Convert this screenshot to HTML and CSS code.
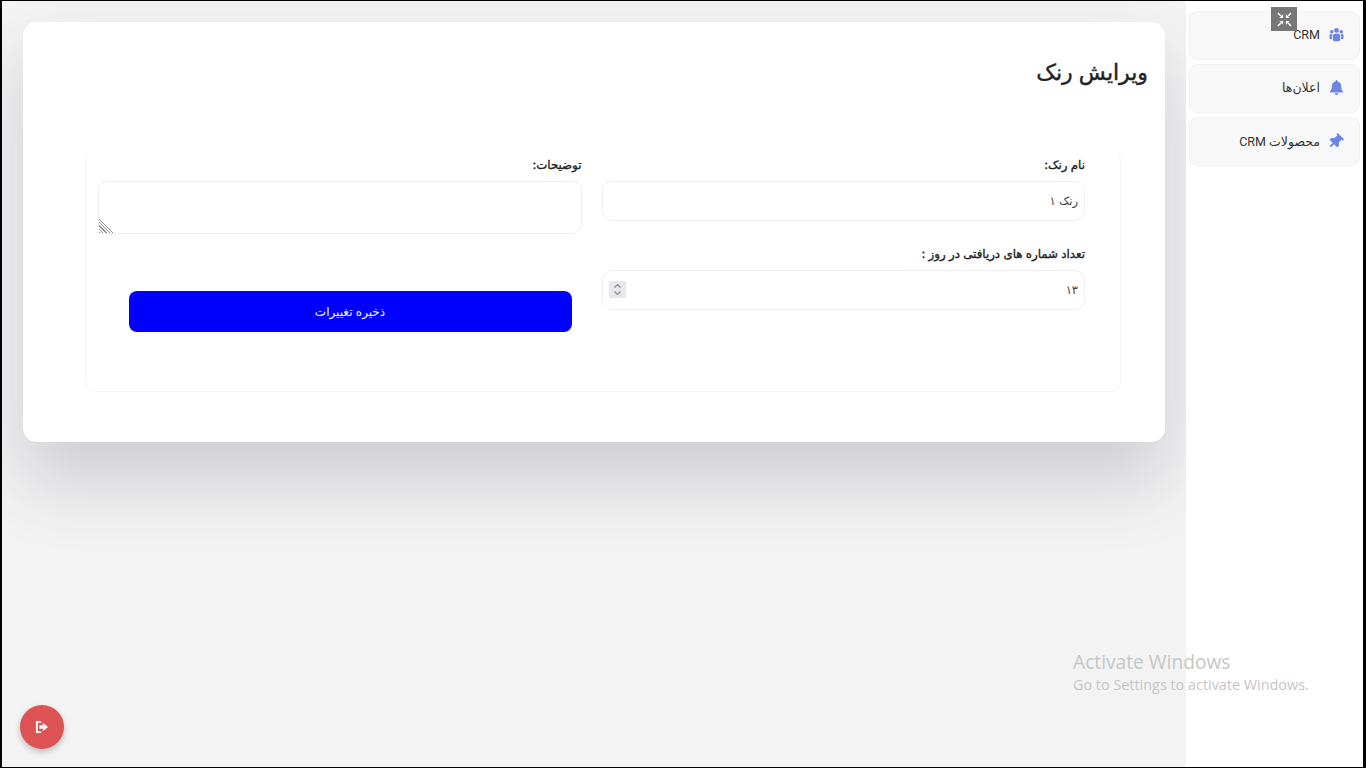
FILE: index.html
```html
<!DOCTYPE html>
<html lang="fa" dir="rtl">
<head>
<meta charset="utf-8">
<title>ویرایش رنک</title>
<link rel="stylesheet" href="styles.css">
</head>
<body>
<div class="frame">
  <aside class="sidebar">
    <a class="nav-item"><svg class="nav-icon" viewBox="0 0 16 16"><circle cx="8" cy="3.6" r="2.6"/><circle cx="2.9" cy="5" r="1.9"/><circle cx="13.1" cy="5" r="1.9"/><path d="M6.4 7.2h3.2c1.3 0 2.3 1 2.3 2.3v4.2c0 .9-.7 1.6-1.6 1.6H5.700c-.9 0-1.600-.7-1.600-1.600V9.500c0-1.300 1-2.300 2.300-2.300zM1.900 7.400h1.700c-.3.600-.5 1.300-.5 2.100v3.600H1.800c-.8 0-1.300-.6-1.300-1.300V8.900c0-.8.600-1.500 1.400-1.500zM12.400 7.400h1.700c.8 0 1.400.7 1.400 1.500v2.900c0 .7-.5 1.300-1.300 1.300h-1.300V9.500c0-.8-.2-1.500-.5-2.100z"/></svg><span>CRM</span></a>
    <a class="nav-item"><svg class="nav-icon" viewBox="0 0 448 512"><path d="M224 0c-18 0-32 14-32 32v19C119 66 64 131 64 208v29c0 47-17 92-48 127l-7 8c-8 9-10 23-5 34s16 18 28 18h384c12 0 23-7 28-18s3-25-5-34l-7-8c-31-35-48-80-48-127v-29c0-77-55-142-128-157V32c0-18-14-32-32-32zm45 493c12-12 19-28 19-45H160c0 17 7 33 19 45s28 19 45 19 33-7 45-19z"/></svg><span>اعلان‌ها</span></a>
    <a class="nav-item"><svg class="nav-icon pin" viewBox="-128 -64 640 640"><g transform="rotate(45 192 256)"><path d="M32 32C32 14 46 0 64 0h256c18 0 32 14 32 32s-14 32-32 32h-29l11 148c37 20 66 54 79 96l1 3c3 10 1 20-5 29s-15 13-25 13H32c-10 0-20-5-26-13s-7-19-4-29l1-3c13-42 42-76 79-96L93 64H64C46 64 32 50 32 32zm128 320h64v128c0 18-14 32-32 32s-32-14-32-32V352z"/></g></svg><span>محصولات CRM</span></a>
  </aside>
  <main class="content">
    <section class="card">
      <h1 class="title">ویرایش رنک</h1>
      <form class="panel">
        <div class="col">
          <label class="field">
            <span class="label">نام رنک:</span>
            <input class="control" type="text" value="رنک ۱">
          </label>
          <label class="field">
            <span class="label">تعداد شماره های دریافتی در روز :</span>
            <span class="number-wrap">
              <input class="control" type="text" value="۱۳">
              <svg class="spinner" viewBox="0 0 17 17"><rect width="17" height="17" fill="#e9e9ed"/><path d="M5.500 6.500 8.500 3.500 11.500 6.500M5.500 10.500 8.500 13.500 11.500 10.500" fill="none" stroke="#8a8a8e" stroke-width="1.2"/></svg>
            </span>
          </label>
        </div>
        <div class="col">
          <label class="field">
            <span class="label">توضیحات:</span>
            <textarea class="control area"></textarea>
          </label>
          <button class="save" type="button">ذخیره تغییرات</button>
        </div>
      </form>
    </section>
    <button class="exit" type="button"><svg viewBox="0 0 16 14" width="14" height="12"><path d="M7 1H2v12h5" fill="none" stroke="#fff" stroke-width="2.2"/><path d="M5 5h4V2l6 5-6 5V9H5z" fill="#fff"/></svg></button>
  </main>
  <button class="fs" type="button"><svg viewBox="0 0 16 16" width="15" height="15"><path d="M6.500 6.500H2.500L6.500 2.500zM9.500 6.500h4l-4-4zM6.500 9.500H2.500l4 4zM9.500 9.500h4l-4 4z" fill="#fff"/><path d="M1 1l3.200 3.200M15 1l-3.200 3.200M1 15l3.200-3.200M15 15l-3.200-3.200" fill="none" stroke="#fff" stroke-width="1.600"/></svg></button>
  <div class="watermark" dir="ltr">
    <div class="wm-big">Activate Windows</div>
    <div class="wm-small">Go to Settings to activate Windows.</div>
  </div>
</div>
</body>
</html>
```
FILE: styles.css
```css
* { box-sizing: border-box; }
html, body { margin: 0; height: 100%; overflow: hidden; }
body { background: #000; font-family: Inter, "DejaVu Sans", sans-serif; color: #222; }
.frame {
  position: relative;
  display: flex;
  height: 768px;
  border-style: solid;
  border-color: #000;
  border-width: 1px 3px 1px 2px;
  background: #f3f3f3;
}
.sidebar {
  position: relative;
  z-index: 1;
  width: 177px;
  flex: none;
  background: #fff;
  padding: 10px 3px 0 3px;
  display: flex;
  flex-direction: column;
  gap: 4.7px;
}
.nav-item {
  height: 48.5px;
  display: flex;
  align-items: center;
  gap: 9px;
  padding: 0 15px 1px 0;
  background: #f8f8f8;
  border: 1px solid #f1f1f1;
  border-radius: 9px;
  font: 12.5px Roboto, "DejaVu Sans", sans-serif;
  color: #333;
}
.nav-icon { width: 15px; height: 15px; fill: #6e85e6; flex: none; }
.pin { width: 19px; height: 19px; margin: 0 -1px 0 -3px; }
.content { flex: 1; position: relative; padding: 21px 21px 0 21px; min-width: 0; }
.card {
  height: 420px;
  background: #fff;
  border-radius: 14px;
  box-shadow: 0 40px 70px rgba(60, 55, 80, 0.2);
  padding: 36px 17px 0 17px;
}
.title {
  margin: 0 0 72px;
  font-size: 22px;
  line-height: 28px;
  font-weight: 400;
  -webkit-text-stroke: 0.4px #222;
  color: #222;
}
.panel {
  height: 242px;
  margin: -8px 27px 0 45px;
  padding: 6px 35px 0 12px;
  border: 1px solid #f5f5f5;
  border-top-color: transparent;
  border-radius: 10px;
  display: grid;
  grid-template-columns: 1fr 1fr;
  column-gap: 20px;
}
.col { display: flex; flex-direction: column; min-width: 0; }
.field { display: block; margin-bottom: 25px; }
.label {
  display: block;
  font-size: 11.8px;
  line-height: 16px;
  font-weight: 400;
  -webkit-text-stroke: 0.35px #222;
  color: #222;
  height: 17px;
  margin-bottom: 7px;
}
.control {
  display: block;
  width: 100%;
  height: 40px;
  border: 1px solid #f0f0f2;
  border-radius: 10px;
  padding: 0 6px;
  background: #fff;
  font: 11.5px Inter, "DejaVu Sans", sans-serif;
  color: #444;
  outline: none;
}
.area { height: 53px; resize: vertical; }
.area::-webkit-resizer {
  background:
    linear-gradient(to top right, transparent 50%, #fff 50%),
    repeating-linear-gradient(45deg, #8c8c8c 0 1px, #fff 1px 2.4px);
}
.number-wrap { display: block; position: relative; }
.spinner { position: absolute; left: 7px; top: 11px; width: 17px; height: 17px; }
.save {
  width: 443px;
  height: 41px;
  margin: 32px 10px 0 0;
  align-self: flex-start;
  border: 0;
  border-radius: 8px;
  background: #00f;
  color: #f4f4ff;
  font: 12px Inter, "DejaVu Sans", sans-serif;
}
.exit {
  position: absolute;
  left: 18px;
  bottom: 18px;
  width: 44px;
  height: 44px;
  border: 0;
  padding: 0;
  border-radius: 50%;
  background: #dd5252;
  box-shadow: 0 3px 6px rgba(0, 0, 0, 0.22);
  display: flex;
  align-items: center;
  justify-content: center;
}
.fs {
  position: absolute;
  z-index: 2;
  top: 6px;
  right: 66px;
  width: 26px;
  height: 24px;
  border: 0;
  padding: 0;
  background: #777;
  display: flex;
  align-items: center;
  justify-content: center;
}
.watermark {
  position: absolute;
  z-index: 2;
  left: 1071px;
  top: 648px;
  color: #c6c6c6;
  font-family: "Open Sans", sans-serif;
  pointer-events: none;
}
.wm-big { font-size: 19.2px; line-height: 26px; }
.wm-small { font-size: 14.4px; line-height: 20px; }
```
